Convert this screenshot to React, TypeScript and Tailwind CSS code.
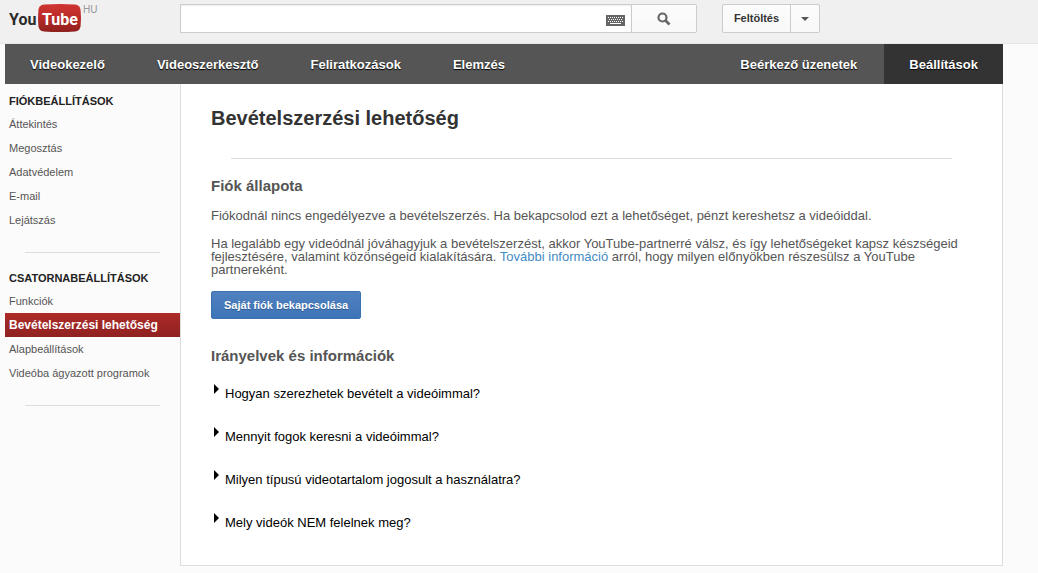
import { useState } from "react";

const accountLinks = ["Áttekintés", "Megosztás", "Adatvédelem", "E-mail", "Lejátszás"];
const channelLinks = [
  "Funkciók",
  "Bevételszerzési lehetőség",
  "Alapbeállítások",
  "Videóba ágyazott programok",
];
const navLinks = ["Videokezelő", "Videoszerkesztő", "Feliratkozások", "Elemzés"];
const questions = [
  "Hogyan szerezhetek bevételt a videóimmal?",
  "Mennyit fogok keresni a videóimmal?",
  "Milyen típusú videotartalom jogosult a használatra?",
  "Mely videók NEM felelnek meg?",
];

function Logo() {
  return (
    <a href="#" aria-label="YouTube HU" className="flex w-[171px] shrink-0 items-start">
      <svg width="74" height="34" viewBox="0 0 74 34">
        <defs>
          <linearGradient id="tube" x1="0" y1="0" x2="0" y2="1">
            <stop offset="0" stopColor="#cf3532" />
            <stop offset="0.5" stopColor="#b92a27" />
            <stop offset="1" stopColor="#8e201d" />
          </linearGradient>
        </defs>
        <path
          d="M35 4.500Q50.500 3.500 66 4.500Q71 5 71.600 10Q72.400 18 71.600 26Q71 31 66 31.500Q50.500 32.500 35 31.500Q30 31 29.400 26Q28.600 18 29.400 10Q30 5 35 4.500Z"
          fill="url(#tube)"
        />
        <g fontFamily="Roboto, 'Liberation Sans', sans-serif" fontWeight="bold" fontSize="16">
          <text x="0" y="25" fill="#2b2b2b">You</text>
          <text x="33" y="25" fill="#fff">Tube</text>
        </g>
      </svg>
      <span className="mt-1 text-[10px] leading-3 text-[#999]">HU</span>
    </a>
  );
}

function KeyboardIcon() {
  return (
    <svg width="19" height="11" viewBox="0 0 19 11">
      <rect width="19" height="11" fill="#666" />
      <path
        d="M2 2.500H17M3 4.500H17M2 6.500H17"
        stroke="#fff"
        strokeWidth="1"
        strokeDasharray="1 1"
      />
      <path d="M4 8.500H15" stroke="#fff" strokeWidth="1" />
    </svg>
  );
}

function SearchIcon() {
  return (
    <svg width="14" height="14" viewBox="0 0 14 14" fill="none" stroke="#666">
      <circle cx="5.500" cy="5.500" r="4" strokeWidth="2.200" />
      <path d="M8.500 8.500L12.500 12.500" strokeWidth="2.600" />
    </svg>
  );
}

function SideSection({ title, links, active }: { title: string; links: string[]; active?: string }) {
  return (
    <section>
      <h3 className="px-1 text-[11px] font-bold leading-[22px] text-[#222]">{title}</h3>
      <ul>
        {links.map((l) => (
          <li key={l}>
            <a
              href="#"
              className={
                l === active
                  ? "block whitespace-nowrap bg-linear-to-b from-[#ad2b28] to-[#8f2221] px-1 text-xs font-bold leading-6 text-white"
                  : "block whitespace-nowrap px-1 text-[11px] leading-6 text-[#555]"
              }
            >
              {l}
            </a>
          </li>
        ))}
      </ul>
      <hr className="mx-5 mt-5 border-[#ddd]" />
    </section>
  );
}

export default function App() {
  const [query, setQuery] = useState("");

  return (
    <div className="min-h-screen bg-[#fbfbfb] font-['Liberation_Sans',Arial,sans-serif]">
      <header className="flex h-11 items-start border-b border-[#e6e6e6] bg-[#f0f0f0] pl-[9px]">
        <Logo />
        <form className="mt-1 flex h-[29px]" onSubmit={(e) => e.preventDefault()}>
          <div className="flex w-[452px] items-center border border-[#ccc] bg-white pr-1.5 shadow-[inset_0_1px_2px_#eee]">
            <input
              type="text"
              aria-label="Keresés"
              value={query}
              onChange={(e) => setQuery(e.target.value)}
              className="h-full min-w-0 flex-1 px-2 text-[13px] outline-none"
            />
            <button type="button" aria-label="Billentyűzet" className="mt-1">
              <KeyboardIcon />
            </button>
          </div>
          <button
            type="submit"
            aria-label="Keresés indítása"
            className="flex w-[65px] items-center justify-center rounded-r-xs border border-l-0 border-[#ccc] bg-linear-to-b from-[#fcfcfc] to-[#f8f8f8]"
          >
            <SearchIcon />
          </button>
        </form>
        <div className="mt-1 ml-[25px] flex h-[29px] rounded-xs border border-[#ccc] bg-linear-to-b from-[#fcfcfc] to-[#f8f8f8]">
          <button className="w-[68px] border-r border-[#ccc] text-[11px] font-bold text-[#333]">Feltöltés</button>
          <button aria-label="További lehetőségek" className="flex w-7 items-center justify-center">
            <svg width="8" height="4" viewBox="0 0 8 4">
              <path d="M0 0H8L4 4Z" fill="#555" />
            </svg>
          </button>
        </div>
      </header>

      <div className="mr-[35px] ml-[5px]">
        <nav className="flex h-10 gap-0.5 bg-[#555] text-[13px] font-bold leading-[38px] text-white [text-shadow:0_1px_1px_#000]">
          {navLinks.map((l) => (
            <a key={l} href="#" className="px-[25px] pt-0.5">
              {l}
            </a>
          ))}
          <a href="#" className="ml-auto px-[25px] pt-0.5">
            Beérkező üzenetek
          </a>
          <a href="#" className="bg-[#333] px-[25px] pt-0.5">
            Beállítások
          </a>
        </nav>

        <div className="flex">
          <aside className="flex w-[175px] shrink-0 flex-col gap-[14px] pt-1.5">
            <SideSection title="FIÓKBEÁLLÍTÁSOK" links={accountLinks} />
            <SideSection title="CSATORNABEÁLLÍTÁSOK" links={channelLinks} active="Bevételszerzési lehetőség" />
          </aside>

          <main className="min-w-0 flex-1 border border-t-0 border-[#ddd] bg-white px-[30px] pt-[22px] pb-[34px] text-[13px] leading-[13px] text-[#555]">
            <h1 className="text-xl font-bold leading-6 text-[#333]">Bevételszerzési lehetőség</h1>
            <hr className="mx-5 mt-7 border-[#ddd]" />
            <h2 className="mt-[17px] text-[15px] font-bold leading-5">Fiók állapota</h2>
            <p className="mt-[13px]">
              Fiókodnál nincs engedélyezve a bevételszerzés. Ha bekapcsolod ezt a lehetőséget, pénzt kereshetsz a
              videóiddal.
            </p>
            <p className="mt-[15px]">
              Ha legalább egy videódnál jóváhagyjuk a bevételszerzést, akkor YouTube-partnerré válsz, és így
              lehetőségeket kapsz készségeid fejlesztésére, valamint közönségeid kialakítására.{" "}
              <a href="#" className="text-[#438bc5]">
                További információ
              </a>{" "}
              arról, hogy milyen előnyökben részesülsz a YouTube partnereként.
            </p>
            <button className="mt-[15px] h-7 rounded-xs border border-[#3b71b0] bg-linear-to-b from-[#5080be] to-[#3d75b8] px-3 text-[11px] font-bold text-white [text-shadow:0_1px_0_#2c5a91]">
              Saját fiók bekapcsolása
            </button>
            <h2 className="mt-[27px] text-[15px] font-bold leading-5">Irányelvek és információk</h2>
            <ul className="mt-4 flex flex-col gap-[23px] text-black">
              {questions.map((q) => (
                <li key={q}>
                  <button className="flex h-5 items-start text-left">
                    <svg width="14" height="10" viewBox="0 0 14 10" className="mt-0.5">
                      <path d="M3 0L8 5L3 10Z" fill="#000" />
                    </svg>
                    <span className="mt-[5px]">{q}</span>
                  </button>
                </li>
              ))}
            </ul>
          </main>
        </div>
      </div>
    </div>
  );
}
